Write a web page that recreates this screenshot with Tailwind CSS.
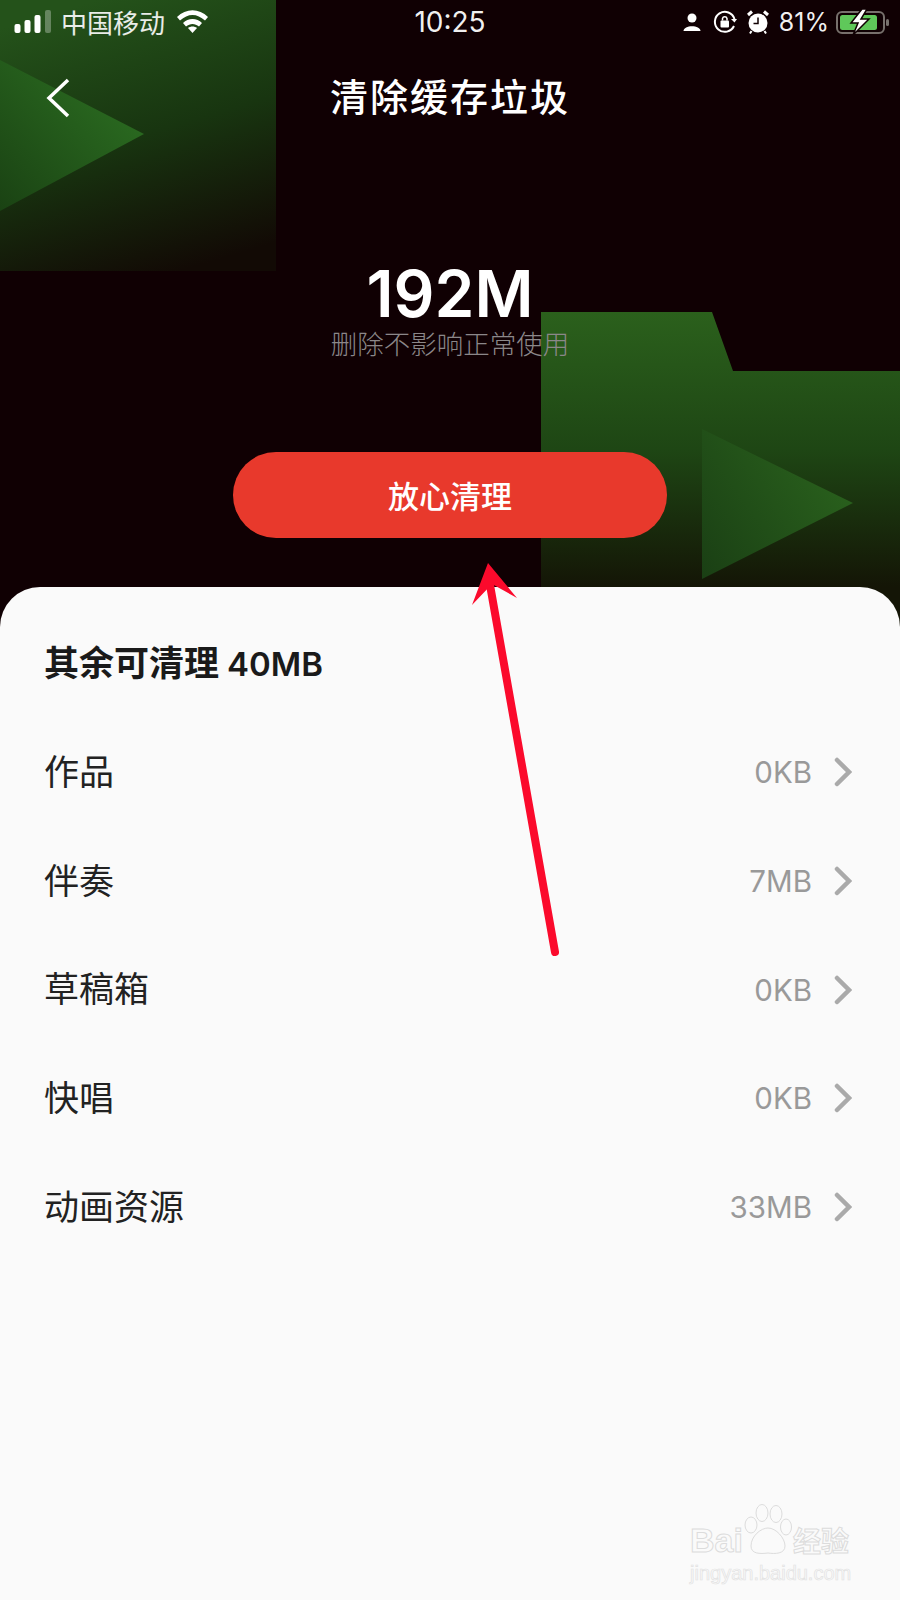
<!DOCTYPE html>
<html lang="zh-CN">
<head>
  <meta charset="UTF-8" />
  <title>清除缓存垃圾</title>
  <script src="https://cdn.jsdelivr.net/npm/@tailwindcss/browser@4"></script>
</head>
<body class="bg-[#fafafa] font-['Noto_Sans_CJK_SC','Noto_Sans',sans-serif]">
  <div class="relative w-[900px] h-[1600px] overflow-hidden flex flex-col">

    <!-- dark header with the green background art, runs 40px under the sheet for its round corners -->
    <div class="relative h-[627px] shrink-0 bg-[#100003] text-white">
      <svg class="absolute inset-0" width="900" height="627" viewBox="0 0 900 627">
        <defs>
          <linearGradient id="tl" x1="0.35" y1="0" x2="0.65" y2="1">
            <stop offset="0" stop-color="#24521a" />
            <stop offset="0.5" stop-color="#183510" />
            <stop offset="1" stop-color="#120a05" />
          </linearGradient>
          <linearGradient id="tlTri" x1="0" y1="1" x2="0.8" y2="0.2">
            <stop offset="0" stop-color="#1a4213" />
            <stop offset="1" stop-color="#2a6a20" />
          </linearGradient>
          <linearGradient id="folder" gradientUnits="userSpaceOnUse" x1="0" y1="312" x2="0" y2="587">
            <stop offset="0" stop-color="#2b601c" />
            <stop offset="0.5" stop-color="#1e4614" />
            <stop offset="1" stop-color="#141506" />
          </linearGradient>
          <linearGradient id="brTri" x1="0" y1="1" x2="1" y2="0.3">
            <stop offset="0" stop-color="#1a3f14" />
            <stop offset="1" stop-color="#2a621d" />
          </linearGradient>
        </defs>
        <rect x="0" y="0" width="276" height="271" fill="url(#tl)" />
        <polygon points="0,60 144,134 0,211" fill="url(#tlTri)" />
        <polygon points="541,312 712,312 733,371 900,371 900,627 541,627" fill="url(#folder)" />
        <polygon points="702,429 853,503 702,579" fill="url(#brTri)" />
      </svg>

      <!-- status bar -->
      <div class="relative h-[44px] flex items-center justify-between pl-[14px] pr-[10px]">
        <div class="flex items-center w-[300px]">
          <svg width="38" height="24" viewBox="0 0 38 24">
            <rect x="0.500" y="14" width="6" height="9" rx="2" fill="#fff" />
            <rect x="10.500" y="10" width="6" height="13" rx="2" fill="#fff" />
            <rect x="20.500" y="5" width="6" height="18" rx="2" fill="#fff" />
            <rect x="31" y="0" width="6" height="23" rx="2" fill="#fff" fill-opacity="0.3" />
          </svg>
          <span class="ml-[9px] text-[26px] leading-none text-white/90">中国移动</span>
          <svg class="ml-[11px] -mt-[3px]" width="33" height="25" viewBox="0 0 33 25">
            <path d="M1 9 C10 0 23 0 32 9 L29 12.500 C21 5 12 5 4 12.500 Z" fill="#fff" />
            <path d="M7 15 C12 9.500 21 9.500 26 15 L23 18.500 C19 15 14 15 10 18.500 Z" fill="#fff" />
            <path d="M12 20 C14.500 18 18.500 18 21 20 L16.500 25 Z" fill="#fff" />
          </svg>
        </div>
        <span class="mr-[4px] text-[28px] leading-none text-white/95 font-['Inter',sans-serif]">10:25</span>
        <div class="flex items-center justify-end w-[300px]">
          <svg width="18" height="18" viewBox="0 0 18 18">
            <circle cx="9" cy="5" r="4.500" fill="#fff" />
            <path d="M0.500 18 C0.500 11.500 17.500 11.500 17.500 18 Z" fill="#fff" />
          </svg>
          <svg class="ml-[12px]" width="24" height="24" viewBox="0 0 24 24" fill="none">
            <path d="M21 16 A10 10 0 1 1 21.500 9" stroke="#fff" stroke-width="2" />
            <path d="M18 9 H24 L21.500 12.500 Z" fill="#fff" />
            <rect x="7.500" y="10.500" width="8.500" height="7" rx="1" fill="#fff" />
            <path d="M9.500 10.500 V8.500 A2.300 2.300 0 0 1 14 8.500 V10.500" stroke="#fff" stroke-width="1.500" />
          </svg>
          <svg class="ml-[10px]" width="22" height="24" viewBox="0 0 22 24" fill="none">
            <circle cx="11" cy="13" r="9.500" fill="#fff" />
            <path d="M11 7.500 V13.500 H6.500" stroke="#100003" stroke-width="1.500" />
            <path d="M1 5 L5 1.500 M21 5 L17 1.500" stroke="#fff" stroke-width="3" />
            <path d="M4.500 21 L3 23.500 M17.500 21 L19 23.500" stroke="#fff" stroke-width="2" />
          </svg>
          <span class="ml-[10px] text-[25px] leading-none text-white/95 font-['Inter',sans-serif]">81%</span>
          <svg class="ml-[7px]" width="54" height="26" viewBox="0 0 54 26">
            <rect x="1" y="3" width="47" height="21" rx="5" fill="none" stroke="#77706c" stroke-width="2" />
            <rect x="4" y="6" width="37" height="15" rx="2.500" fill="#5fc85a" />
            <rect x="50" y="10" width="3" height="7" rx="1.500" fill="#77706c" />
            <path d="M26 0 L15 14 H22 L17 26 L33 10 H25 L31 0 Z" fill="#fff" stroke="#100003" stroke-width="1.500" />
          </svg>
        </div>
      </div>

      <!-- nav bar -->
      <div class="relative h-[102px] flex items-center justify-center">
        <svg class="absolute left-[45px] top-[33px]" width="26" height="42" viewBox="0 0 26 42" fill="none">
          <path d="M23 3 L4 21 L23 39" stroke="#fff" stroke-width="3.500" />
        </svg>
        <h1 class="text-[38px] leading-none font-medium tracking-[2px]">清除缓存垃圾</h1>
      </div>

      <!-- size summary -->
      <div class="relative flex flex-col items-center mt-[118px]">
        <div class="text-[64px] leading-[60px] font-semibold font-['Inter',sans-serif]">192M</div>
        <div class="text-[26.500px] leading-none text-[#8b8789] mt-[6px] font-light">删除不影响正常使用</div>
      </div>

      <button class="absolute left-[233px] top-[452px] w-[434px] h-[86px] rounded-full bg-[#e8392c] text-white text-[31px] font-medium">放心清理</button>
    </div>

    <!-- white sheet -->
    <div class="relative -mt-[40px] flex-1 bg-[#fafafa] rounded-t-[40px] pl-[44px] pr-[48px]">
      <h2 class="pt-[54px] text-[35px] leading-[40px] font-semibold text-[#1a1a1a]">其余可清理 <span class="text-[33px] font-['Inter',sans-serif]">40MB</span></h2>
      <div class="mt-[34px] flex flex-col">
        <div class="h-[108.700px] flex items-center justify-between">
          <span class="pb-[4px] text-[35px] text-[#222]">作品</span>
          <span class="flex items-center gap-[22px]"><span class="text-[29.500px] text-[#999] font-['Inter',sans-serif]">0KB</span><svg width="18" height="30" viewBox="0 0 18 30" fill="none"><path d="M3 3 L15 15 L3 27" stroke="#aaa" stroke-width="4.500" stroke-linecap="round" /></svg></span>
        </div>
        <div class="h-[108.700px] flex items-center justify-between">
          <span class="pb-[4px] text-[35px] text-[#222]">伴奏</span>
          <span class="flex items-center gap-[22px]"><span class="text-[29.500px] text-[#999] font-['Inter',sans-serif]">7MB</span><svg width="18" height="30" viewBox="0 0 18 30" fill="none"><path d="M3 3 L15 15 L3 27" stroke="#aaa" stroke-width="4.500" stroke-linecap="round" /></svg></span>
        </div>
        <div class="h-[108.700px] flex items-center justify-between">
          <span class="pb-[4px] text-[35px] text-[#222]">草稿箱</span>
          <span class="flex items-center gap-[22px]"><span class="text-[29.500px] text-[#999] font-['Inter',sans-serif]">0KB</span><svg width="18" height="30" viewBox="0 0 18 30" fill="none"><path d="M3 3 L15 15 L3 27" stroke="#aaa" stroke-width="4.500" stroke-linecap="round" /></svg></span>
        </div>
        <div class="h-[108.700px] flex items-center justify-between">
          <span class="pb-[4px] text-[35px] text-[#222]">快唱</span>
          <span class="flex items-center gap-[22px]"><span class="text-[29.500px] text-[#999] font-['Inter',sans-serif]">0KB</span><svg width="18" height="30" viewBox="0 0 18 30" fill="none"><path d="M3 3 L15 15 L3 27" stroke="#aaa" stroke-width="4.500" stroke-linecap="round" /></svg></span>
        </div>
        <div class="h-[108.700px] flex items-center justify-between">
          <span class="pb-[4px] text-[35px] text-[#222]">动画资源</span>
          <span class="flex items-center gap-[22px]"><span class="text-[29.500px] text-[#999] font-['Inter',sans-serif]">33MB</span><svg width="18" height="30" viewBox="0 0 18 30" fill="none"><path d="M3 3 L15 15 L3 27" stroke="#aaa" stroke-width="4.500" stroke-linecap="round" /></svg></span>
        </div>
      </div>
    </div>

    <!-- red annotation arrow -->
    <svg class="absolute inset-0 pointer-events-none" width="900" height="1600" viewBox="0 0 900 1600" fill="none">
      <path d="M555 952 L490 585" stroke="#fb0a2c" stroke-width="8" stroke-linecap="round" />
      <polygon points="488,563 517,598 492,584 472,605" fill="#fb0a2c" />
    </svg>

    <!-- baidu watermark -->
    <div class="absolute left-[690px] top-[1503px] w-[165px] flex flex-col text-transparent [-webkit-text-stroke:1px_#dcdcdc]">
      <div class="flex items-end h-[54px]">
        <span class="text-[34px] leading-[34px] font-bold font-['Liberation_Sans',sans-serif]">Bai</span>
        <svg class="mb-[1px]" width="50" height="52" viewBox="0 0 50 52" fill="none" stroke="#dcdcdc" stroke-width="1">
          <ellipse cx="8" cy="21" rx="6" ry="8" />
          <ellipse cx="19" cy="9" rx="6" ry="8.500" />
          <ellipse cx="33" cy="10" rx="6" ry="8.500" />
          <ellipse cx="43" cy="23" rx="5.500" ry="8" />
          <path d="M8 42 C8 32 18 24 25 24 C33 24 42 34 42 42 C42 50 32 50 25 49 C17 50 8 50 8 42 Z" />
        </svg>
        <span class="text-[28px] leading-[34px] font-bold">经验</span>
      </div>
      <div class="text-[20px] leading-[24px] font-['Liberation_Sans',sans-serif] [-webkit-text-stroke:0.7px_#e2e2e2] mt-[4px]">jingyan.baidu.com</div>
    </div>
  </div>
</body>
</html>
